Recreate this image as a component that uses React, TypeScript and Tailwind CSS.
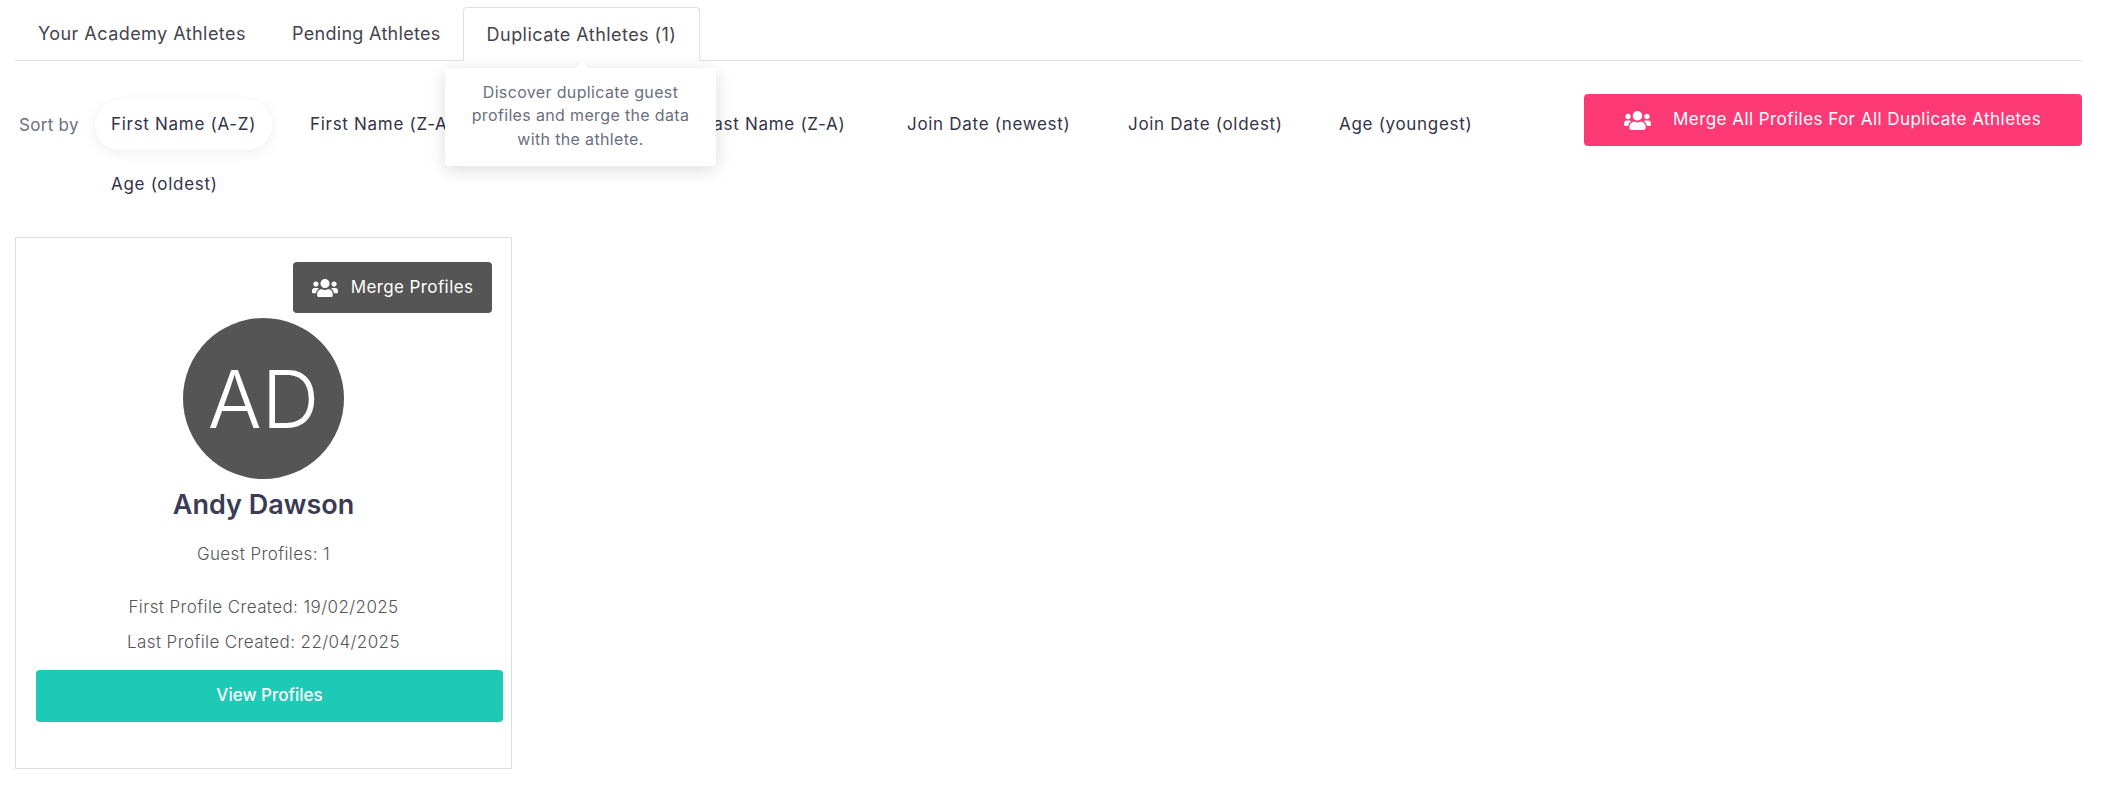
import { FaUsers } from "react-icons/fa"

const SORT_OPTIONS = [
  { label: "First Name (A-Z)", width: "w-[199px]", active: true },
  { label: "First Name (Z-A)", width: "w-[197px]" },
  { label: "Last Name (A-Z)", width: "w-[196px]" },
  { label: "Last Name (Z-A)", width: "w-[204px]" },
  { label: "Join Date (newest)", width: "w-[221px]" },
  { label: "Join Date (oldest)", width: "w-[211px]" },
  { label: "Age (youngest)", width: "w-[199px]" },
  { label: "Age (oldest)", width: "w-[199px]" },
]

export default function App() {
  return (
    <div className="min-h-[791px] bg-white pl-[15px] pr-[23px] pt-[7px] font-['Inter',sans-serif] text-[#33334a]">
      {/* Tabs */}
      <div className="relative flex h-[54px] border-b border-[#dee2e6]">
        <div className="flex w-[254px] items-center pl-[23px] text-[18px] tracking-[0.45px] text-[#44444f] whitespace-nowrap">Your Academy Athletes</div>
        <div className="flex w-[194px] items-center pl-[23px] text-[18px] tracking-[0.3px] text-[#44444f] whitespace-nowrap">Pending Athletes</div>
        <div className="flex h-[54px] w-[237px] items-center justify-center rounded-t border border-[#dee2e6] border-b-white bg-white text-[18px] tracking-[0.45px] text-[#44444f] whitespace-nowrap">
          Duplicate Athletes (1)
        </div>

        {/* Tooltip */}
        <div className="absolute left-[430px] top-[61px] z-10 flex h-[98px] w-[271px] items-center justify-center rounded-sm bg-white pb-[2px] text-center text-[16px] leading-[23.5px] tracking-[0.35px] text-[#6b6f80] shadow-[0_4px_18px_rgba(0,0,0,0.14)]">
          <span>
            Discover duplicate guest
            <br />
            profiles and merge the data
            <br />
            with the athlete.
          </span>
        </div>
        <div className="absolute left-[560px] top-[55px] z-10 h-0 w-0 border-x-[7px] border-b-[7px] border-x-transparent border-b-white"></div>
      </div>

      {/* Sort row */}
      <div className="flex items-start pt-[39px]">
        <div className="w-[80px] shrink-0 pl-1 pt-[13px] text-[17px] leading-6 tracking-[0.3px] text-[#6b6f80]">Sort by</div>
        <div className="flex w-[1489px] shrink-0 flex-wrap content-start gap-y-[10px]">
          {SORT_OPTIONS.map((o) => (
            <div key={o.label} className={`${o.width} h-[50px]`}>
              <div className={`inline-flex h-[50px] items-center rounded-full px-4 text-[17px] tracking-[0.7px] whitespace-nowrap ${o.active ? "bg-white shadow-[0_3px_14px_rgba(0,0,0,0.07)]" : ""}`}>
                {o.label}
              </div>
            </div>
          ))}
        </div>
        <button className="mt-[-6px] flex h-[52px] w-[498px] shrink-0 items-center rounded bg-[#fd3a75] pl-[40px] text-[17px] tracking-[0.45px] text-white whitespace-nowrap">
          <FaUsers className="mr-[22px] h-[27px] w-[27px]" />
          Merge All Profiles For All Duplicate Athletes
        </button>
      </div>

      {/* Card */}
      <div className="mt-[27px] flex h-[532px] w-[497px] flex-col items-center border border-[#dddddd] px-[20px]">
        <div className="flex h-[80px] w-full justify-end pt-[24px]">
          <button className="-mr-[1px] flex h-[51px] w-[199px] items-center justify-center gap-[13px] rounded bg-[#555555] text-[17px] tracking-[0.4px] text-white whitespace-nowrap">
            <FaUsers className="h-[26px] w-[26px]" />
            Merge Profiles
          </button>
        </div>
        <div className="flex h-[161px] w-[161px] shrink-0 items-center justify-center rounded-full bg-[#555555] text-[80px] font-light text-white">AD</div>
        <div className="mt-[8px] text-[27px] leading-[36px] font-semibold text-[#3b3b55]">Andy Dawson</div>
        <div className="mt-[19px] text-[17px] leading-6 font-light tracking-[0.4px] text-[#555555]">Guest Profiles: 1</div>
        <div className="mt-[29px] text-[17px] leading-6 font-light tracking-[0.4px] text-[#555555]">First Profile Created: 19/02/2025</div>
        <div className="mt-[11px] text-[17px] leading-6 font-light tracking-[0.4px] text-[#555555]">Last Profile Created: 22/04/2025</div>
        <button className="mt-[16px] h-[52px] w-[467px] shrink-0 self-start rounded bg-[#1ccab6] text-[17px] font-medium text-white">View Profiles</button>
      </div>
    </div>
  )
}
